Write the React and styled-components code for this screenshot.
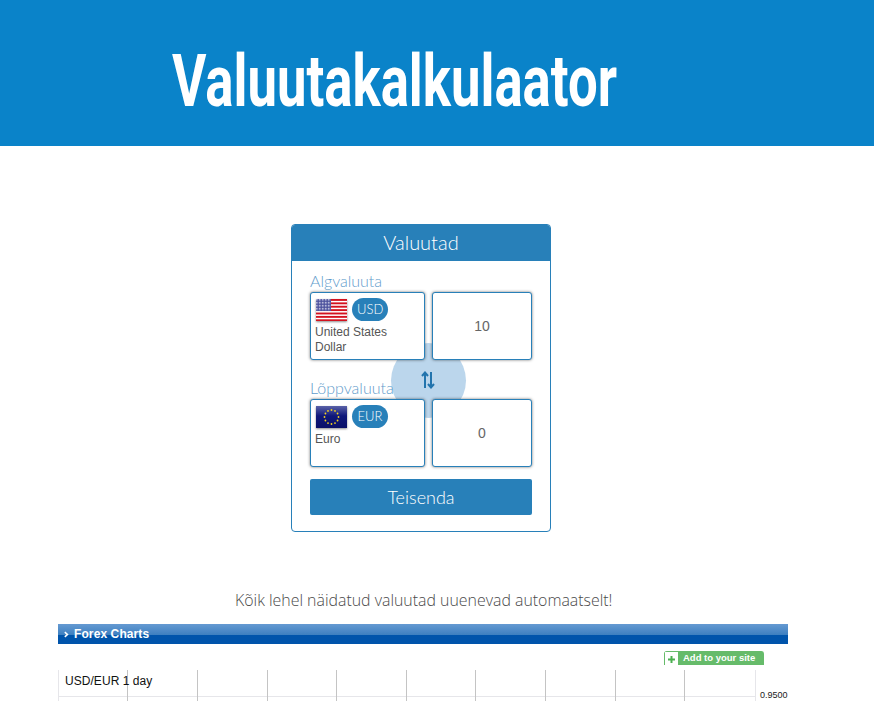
import React from 'react'
import styled, { createGlobalStyle } from 'styled-components'

const GlobalStyle = createGlobalStyle`
  html, body {
    margin: 0;
    height: 100%;
    overflow: hidden;
    background: #fff;
    font-family: "Lato", "Liberation Sans", sans-serif;
  }
  * {
    box-sizing: border-box;
  }
`

const Header = styled.header`
  height: 146px;
  background: #0a83c9;
  padding: 17px 0 0 172px;
  display: flex;
  align-items: center;
`

const Title = styled.h1`
  margin: 0;
  color: #fff;
  font-family: "Roboto", "Liberation Sans", sans-serif;
  font-size: 73px;
  font-weight: 700;
  line-height: 1;
  white-space: nowrap;
  transform: scaleX(0.722);
  transform-origin: left center;
`

const Main = styled.main`
  padding-top: 78px;
  display: flex;
  flex-direction: column;
`

const Card = styled.section`
  width: 260px;
  height: 308px;
  margin-left: 291px;
  border: 1px solid #2880b9;
  border-radius: 4px;
  overflow: hidden;
`

const CardTitle = styled.div`
  height: 36px;
  background: #2880b9;
  color: #fff;
  font-size: 20px;
  font-weight: 300;
  line-height: 35px;
  text-align: center;
`

const CardBody = styled.div`
  position: relative;
  padding: 11px 18px 0;
`

const SwapCircle = styled.div`
  position: absolute;
  left: 99px;
  top: 82px;
  width: 75px;
  height: 75px;
  border-radius: 50%;
  background: #bbd6ec;
  color: #2274ad;
  padding: 0 1px 2px 0;
  display: flex;
  align-items: center;
  justify-content: center;
`

const Label = styled.div`
  position: relative;
  height: 20px;
  color: #5f9ccb;
  font-size: 16px;
  font-weight: 300;
  line-height: 18px;
  margin-top: ${({ $first }) => ($first ? '0' : '19px')};
`

const Row = styled.div`
  position: relative;
  display: flex;
  gap: 7px;
`

const Box = styled.div`
  height: 68px;
  background: #fff;
  border: 1px solid #2880b9;
  border-radius: 3px;
  box-shadow: 0 0 3px rgba(0, 0, 0, 0.55);
`

const CurrencyBox = styled(Box)`
  width: 115px;
  padding: 5px 4px 0 5px;
`

const AmountBox = styled(Box)`
  width: 100px;
  display: flex;
  align-items: center;
  justify-content: center;
  color: #666;
  font-family: "Liberation Sans", sans-serif;
  font-size: 14px;
`

const FlagRow = styled.div`
  display: flex;
  align-items: center;
  gap: 5px;
  height: 23px;
`

const Flag = styled.svg`
  width: 31px;
  height: 22px;
  display: block;
  box-shadow: 0 1px 2px rgba(0, 0, 0, 0.45);
`

const Code = styled.span`
  height: 23px;
  padding: 0 5px;
  min-width: 36px;
  border-radius: 12px;
  background: #2880b9;
  color: #fff;
  font-size: 13px;
  font-weight: 300;
  line-height: 23px;
  text-align: center;
`

const CurrencyName = styled.div`
  margin: 4px 0 0 -1px;
  color: #555;
  font-family: "Liberation Sans", sans-serif;
  font-size: 12px;
  line-height: 15px;
`

const ConvertButton = styled.button`
  display: block;
  position: relative;
  width: 222px;
  height: 36px;
  margin-top: 12px;
  padding: 0;
  border: 0;
  border-radius: 2px;
  background: #2880b9;
  color: #fff;
  font-family: inherit;
  font-size: 18px;
  font-weight: 300;
`

const Notice = styled.p`
  margin: 58px 0 0;
  padding-left: 235px;
  color: #4a4a4a;
  font-family: "Open Sans", sans-serif;
  font-size: 15.9px;
  font-weight: 300;
  line-height: 20px;
  white-space: nowrap;
`

const Widget = styled.section`
  width: 730px;
  margin: 14px 0 0 58px;
  font-family: "Liberation Sans", sans-serif;
`

const WidgetBar = styled.div`
  height: 20px;
  padding-left: 6px;
  display: flex;
  align-items: center;
  gap: 5px;
  color: #fff;
  font-size: 12px;
  font-weight: 700;
  letter-spacing: 0.1px;
  background: linear-gradient(#659ad2 0%, #3d7fc0 55%, #0054ab 55%, #0054ab 100%);
`

const AddRow = styled.div`
  display: flex;
  justify-content: flex-end;
  padding: 7px 24px 0 0;
`

const AddLink = styled.a`
  display: flex;
  width: 100px;
  height: 14px;
  border: 1px solid #66bb6a;
  border-bottom: 0;
  border-radius: 3px 3px 0 0;
  background: #66bb6a;
  color: #fff;
  font-size: 9.5px;
  font-weight: 700;
  line-height: 12px;
`

const PlusTab = styled.span`
  width: 13px;
  background: #fff;
  margin-right: 5px;
  padding: 4px 0 0 3px;
`

const Chart = styled.div`
  position: relative;
  margin-top: 5px;
  height: 40px;
`

const ChartGrid = styled.svg`
  display: block;
`

const ChartLabel = styled.span`
  position: absolute;
  left: 7px;
  top: 4px;
  color: #111;
  font-size: 12px;
  letter-spacing: 0.05px;
`

const AxisValue = styled.span`
  position: absolute;
  left: 702px;
  top: 20px;
  color: #222;
  font-size: 9px;
`

const USFlag = () => (
  <Flag viewBox="0 0 31 22">
    <rect width="31" height="22" fill="#fff" />
    {[0, 1, 2, 3, 4, 5, 6].map((i) => (
      <rect key={i} y={i * 3.385} width="31" height="1.9" fill="#d3121f" />
    ))}
    <rect width="15" height="12" fill="#4a4f9c" />
    <rect width="15" height="12" fill="url(#stars)" />
    <defs>
      <pattern id="stars" width="1.5" height="1.5" patternUnits="userSpaceOnUse">
        <rect width="0.75" height="0.75" fill="#e8e8f4" />
      </pattern>
    </defs>
  </Flag>
)

const EUFlag = () => (
  <Flag viewBox="0 0 31 22">
    <defs>
      <linearGradient id="euBg" x1="0" y1="0" x2="0" y2="1">
        <stop offset="0" stopColor="#5a62a8" />
        <stop offset="0.45" stopColor="#10187a" />
        <stop offset="1" stopColor="#0a1068" />
      </linearGradient>
    </defs>
    <rect width="31" height="22" fill="url(#euBg)" />
    {Array.from({ length: 12 }).map((_, i) => {
      const a = (i * Math.PI) / 6
      return <circle key={i} cx={15.5 + 7 * Math.cos(a)} cy={11 + 7 * Math.sin(a)} r="0.9" fill="#f2d21f" />
    })}
  </Flag>
)

const SwapIcon = () => (
  <svg width="14" height="18" viewBox="0 0 14 18" fill="none" stroke="currentColor" strokeWidth="2">
    <path d="M4 17V2M1 5l3-3.5L7 5" />
    <path d="M10 1v15M7 13l3 3.5 3-3.5" />
  </svg>
)

const gridX = [0.5, 69.5, 139.5, 209.5, 278.5, 348.5, 417.5, 487.5, 557.5, 626.5]

const App = () => {
  return (
    <>
      <GlobalStyle />
      <Header>
        <Title>Valuutakalkulaator</Title>
      </Header>
      <Main>
        <Card>
          <CardTitle>Valuutad</CardTitle>
          <CardBody>
            <SwapCircle>
              <SwapIcon />
            </SwapCircle>
            <Label $first>Algvaluuta</Label>
            <Row>
              <CurrencyBox>
                <FlagRow>
                  <USFlag />
                  <Code>USD</Code>
                </FlagRow>
                <CurrencyName>United States Dollar</CurrencyName>
              </CurrencyBox>
              <AmountBox>10</AmountBox>
            </Row>
            <Label>Lõppvaluuta</Label>
            <Row>
              <CurrencyBox>
                <FlagRow>
                  <EUFlag />
                  <Code>EUR</Code>
                </FlagRow>
                <CurrencyName>Euro</CurrencyName>
              </CurrencyBox>
              <AmountBox>0</AmountBox>
            </Row>
            <ConvertButton>Teisenda</ConvertButton>
          </CardBody>
        </Card>
        <Notice>Kõik lehel näidatud valuutad uuenevad automaatselt!</Notice>
        <Widget>
          <WidgetBar>
            <svg width="5" height="7" viewBox="0 0 5 7" fill="none" stroke="#fff" strokeWidth="1.6">
              <path d="M0.8 1.2L3.4 3.5L0.8 5.8" />
            </svg>
            Forex Charts
          </WidgetBar>
          <AddRow>
            <AddLink>
              <PlusTab>
                <svg width="7" height="7" viewBox="0 0 7 7" fill="#4caf50" style={{ display: 'block' }}>
                  <path d="M2.5 0h2v2.5H7v2H4.5V7h-2V4.5H0v-2h2.5z" />
                </svg>
              </PlusTab>
              Add to your site
            </AddLink>
          </AddRow>
          <Chart>
            <ChartGrid width="730" height="40">
              <line x1="0" y1="26.5" x2="697" y2="26.5" stroke="#e6e6ea" />
              {gridX.map((x, i) => (
                <line key={x} x1={x} y1="0" x2={x} y2="40" stroke={i === 0 ? '#e6e6ea' : '#c4c4c4'} />
              ))}
              <line x1="697.5" y1="0" x2="697.5" y2="40" stroke="#e6e6ea" />
            </ChartGrid>
            <ChartLabel>USD/EUR 1 day</ChartLabel>
            <AxisValue>0.9500</AxisValue>
          </Chart>
        </Widget>
      </Main>
    </>
  )
}

export default App
